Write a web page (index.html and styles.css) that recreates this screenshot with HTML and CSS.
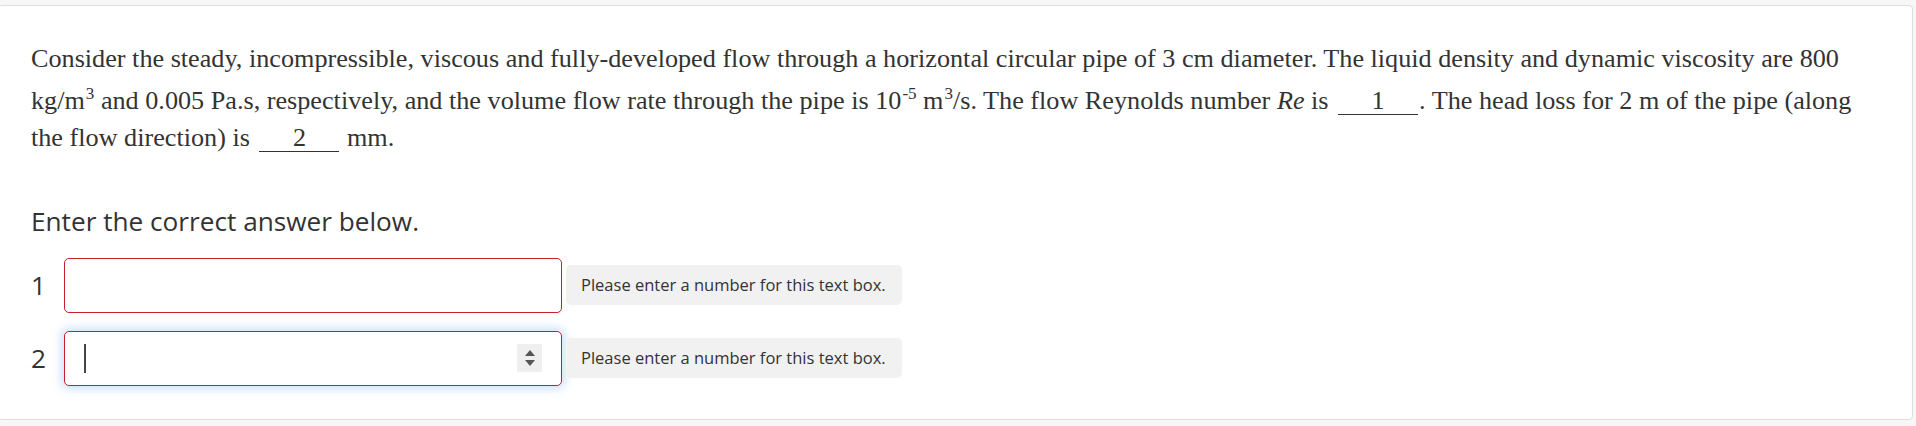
FILE: index.html
```html
<!DOCTYPE html>
<html lang="en">
<head>
<meta charset="utf-8">
<title>Question</title>
<link rel="stylesheet" href="styles.css">
</head>
<body>
<div class="card">
  <p class="question">Consider the steady, incompressible, viscous and fully-developed flow through a horizontal circular pipe of 3 cm diameter. The liquid density and dynamic viscosity are 800 kg/m<sup>3</sup> and 0.005 Pa.s, respectively, and the volume flow rate through the pipe is 10<sup>-5</sup> m<sup>3</sup>/s. The flow Reynolds number <i>Re</i> is <span class="blank">1</span>. The head loss for 2 m of the pipe (along the flow direction) is <span class="blank">2</span> mm.</p>
  <div class="prompt">Enter the correct answer below.</div>
  <div class="answers">
    <div class="row">
      <div class="label">1</div>
      <div class="field"></div>
      <div class="feedback">Please enter a number for this text box.</div>
    </div>
    <div class="row">
      <div class="label">2</div>
      <div class="field focused">
        <span class="caret"></span>
        <span class="spinner"><span class="up"></span><span class="down"></span></span>
      </div>
      <div class="feedback">Please enter a number for this text box.</div>
    </div>
  </div>
</div>
</body>
</html>
```

FILE: styles.css
```css
html, body {
  margin: 0;
  padding: 0;
}
body {
  background: #f7f7f7;
  width: 1916px;
  height: 426px;
  overflow: hidden;
}
.card {
  margin: 5px 3px 0 -2px;
  background: #fff;
  border: 1px solid #dedede;
  border-radius: 4px;
  padding: 34px 30px 33px 32px;
}
.question {
  margin: 0;
  font-family: "Liberation Serif", "Times New Roman", serif;
  font-size: 26.2px;
  line-height: 37px;
  color: #333;
  width: 1850px;
}
.question sup {
  font-size: 17px;
  line-height: 33.6px;
  vertical-align: super;
  margin-left: 1px;
}
.blank {
  display: inline-block;
  width: 80px;
  text-align: center;
  border-bottom: 1px solid #333;
  line-height: 26px;
  margin: 0 1px 0 3px;
}
.prompt {
  margin-top: 47px;
  font-family: "Open Sans", sans-serif;
  font-size: 26.2px;
  line-height: 36px;
  color: #333;
}
.answers {
  margin-top: 19px;
  display: flex;
  flex-direction: column;
  gap: 18px;
}
.row {
  display: flex;
  align-items: center;
}
.label {
  width: 33px;
  font-family: "Open Sans", sans-serif;
  font-size: 26.2px;
  color: #333;
}
.field {
  box-sizing: border-box;
  width: 498px;
  height: 55px;
  border: 1px solid #c8202a;
  border-radius: 5px;
  background: #fff;
  display: flex;
  align-items: center;
  padding: 0 19px 0 19px;
}
.field.focused {
  box-shadow: 0 0 10px 3px rgba(110, 165, 235, 0.35);
}
.caret {
  width: 2px;
  height: 29px;
  background: #444;
}
.spinner {
  margin-left: auto;
  width: 25px;
  height: 28px;
  background: #efefef;
  display: flex;
  flex-direction: column;
  align-items: center;
  justify-content: center;
  gap: 4px;
}
.up {
  width: 0;
  height: 0;
  border-left: 5px solid transparent;
  border-right: 5px solid transparent;
  border-bottom: 6px solid #555;
}
.down {
  width: 0;
  height: 0;
  border-left: 5px solid transparent;
  border-right: 5px solid transparent;
  border-top: 6px solid #555;
}
.feedback {
  margin-left: 4px;
  background: #f1f1f1;
  border-radius: 5px;
  padding: 0 16px 0 15px;
  height: 40px;
  line-height: 40px;
  font-family: "Open Sans", sans-serif;
  font-size: 16.5px;
  color: #333;
}
```
